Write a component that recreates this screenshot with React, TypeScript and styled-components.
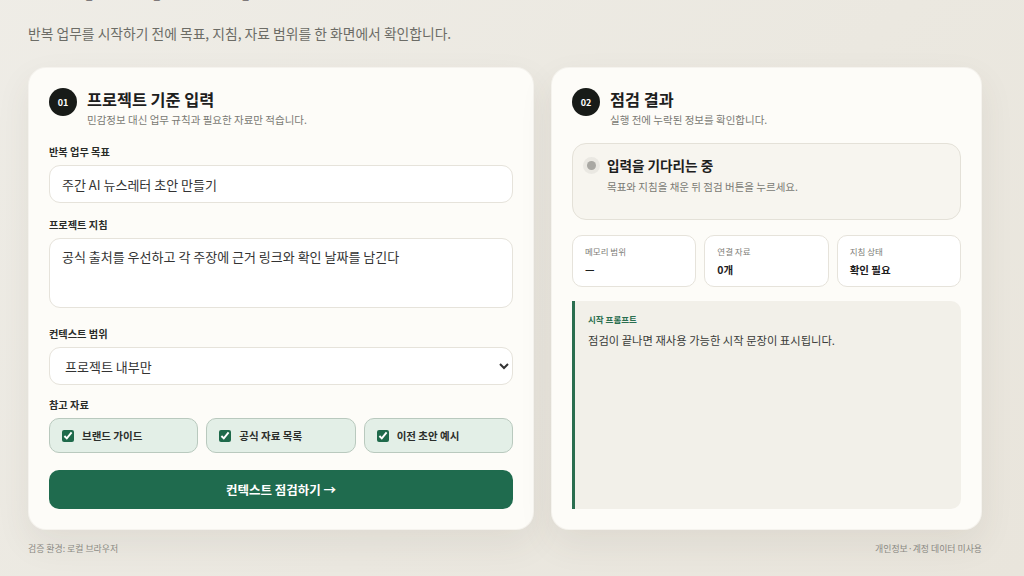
import React, { useLayoutEffect, useState } from "react";
import styled, { createGlobalStyle } from "styled-components";

const GlobalStyle = createGlobalStyle`
  html, body {
    margin: 0;
    padding: 0;
  }

  body {
    background: linear-gradient(135deg, #efede7 0%, #ebe8e0 60%, #e9e5dc 100%);
    font-family: "Noto Sans CJK KR", "Noto Sans", "Liberation Sans", sans-serif;
    color: #1d201d;
    overflow-y: scroll;
  }

  * {
    box-sizing: border-box;
  }
`;

const Page = styled.div`
  width: 954px;
  margin: 0 0 0 28px;
  padding: 72px 0 20px;
`;

const Title = styled.h1`
  margin: 0;
  font-size: 38px;
  line-height: 48px;
  font-weight: 800;
  letter-spacing: -0.5px;
`;

const Lead = styled.p`
  margin: 19px 0 0;
  font-size: 13.8px;
  line-height: 20px;
  color: #6c6c66;
`;

const Grid = styled.div`
  display: grid;
  grid-template-columns: 506px 1fr;
  gap: 17px;
  margin-top: 24px;
`;

const Card = styled.section`
  background: #fdfcf8;
  border-radius: 18px;
  border: 1px solid rgba(120, 110, 90, 0.06);
  box-shadow: 0 14px 34px rgba(80, 70, 50, 0.08);
  padding: 20px;
  display: flex;
  flex-direction: column;
`;

const CardHead = styled.header`
  display: flex;
  align-items: flex-start;
  gap: 10px;
  margin-bottom: 6px;
`;

const Badge = styled.span`
  width: 28px;
  height: 28px;
  border-radius: 50%;
  background: #181b18;
  color: #fff;
  font-size: 9px;
  font-weight: 700;
  display: flex;
  align-items: center;
  justify-content: center;
  flex-shrink: 0;
`;

const HeadText = styled.div`
  display: flex;
  flex-direction: column;
  gap: 2px;
`;

const CardTitle = styled.h2`
  margin: 0;
  font-size: 16.3px;
  line-height: 22px;
  font-weight: 700;
`;

const CardSub = styled.p`
  margin: 0;
  font-size: 10.5px;
  line-height: 16px;
  color: #7a7a74;
`;

const Field = styled.div<{ $space: number }>`
  display: flex;
  flex-direction: column;
  gap: 5px;
  margin-top: ${(p) => p.$space}px;
`;

const Label = styled.label`
  font-size: 10.2px;
  line-height: 16px;
  font-weight: 700;
  color: #2a2c29;
`;

const TextInput = styled.input`
  height: 38px;
  border-radius: 11px;
  border: 1px solid #e6e3db;
  background: #fff;
  padding: 0 12px;
  font-family: inherit;
  font-size: 13px;
  color: #333;
  outline: none;
`;

const TextArea = styled.textarea`
  display: block;
  height: 70px;
  border-radius: 11px;
  border: 1px solid #e6e3db;
  background: #fff;
  padding: 9px 12px;
  font-family: inherit;
  font-size: 13px;
  line-height: 18px;
  color: #333;
  resize: none;
  outline: none;
`;

const Select = styled.select`
  height: 38px;
  border-radius: 11px;
  border: 1px solid #e6e3db;
  background: #fff;
  padding: 0 4px 0 11px;
  font-family: inherit;
  font-size: 13px;
  color: #333;
  outline: none;
`;

const ChipRow = styled.div`
  display: grid;
  grid-template-columns: repeat(3, 1fr);
  gap: 8px;
`;

const Chip = styled.label`
  height: 35px;
  border-radius: 10px;
  border: 1px solid #b9c9be;
  background: #e3efe7;
  display: flex;
  align-items: center;
  gap: 8px;
  padding: 0 12px;
  font-size: 10.5px;
  font-weight: 700;
  color: #2b2e2b;
`;

const Check = styled.input`
  width: 12px;
  height: 12px;
  margin: 0;
  accent-color: #1f6a4b;
`;

const PrimaryButton = styled.button`
  margin-top: 17px;
  height: 39px;
  border: none;
  border-radius: 10px;
  background: #1f6b4e;
  color: #fff;
  font-family: inherit;
  font-size: 12.5px;
  font-weight: 700;
  cursor: pointer;
`;

const StatusBox = styled.div`
  height: 77px;
  border-radius: 14px;
  border: 1px solid #e4e1d8;
  background: #f7f5ef;
  padding: 11px 14px 0;
  margin-top: 9px;
`;

const StatusTitle = styled.div`
  display: flex;
  align-items: center;
  gap: 11px;
  font-size: 13.6px;
  line-height: 20px;
  font-weight: 700;
`;

const Dot = styled.span`
  width: 9px;
  height: 9px;
  border-radius: 50%;
  background: #a9a8a3;
  box-shadow: 0 0 0 4px rgba(170, 168, 160, 0.16);
`;

const StatusSub = styled.p`
  margin: 5px 0 0 20px;
  font-size: 10.5px;
  line-height: 14px;
  color: #7a7a74;
`;

const StatRow = styled.div`
  display: grid;
  grid-template-columns: repeat(3, 1fr);
  gap: 8px;
  margin-top: 15px;
`;

const Stat = styled.div`
  height: 52px;
  border-radius: 10px;
  border: 1px solid #e6e3db;
  background: #fff;
  padding: 9px 12px;
  display: flex;
  flex-direction: column;
  gap: 5px;
`;

const StatLabel = styled.span`
  font-size: 8.5px;
  line-height: 12px;
  color: #7d7d77;
`;

const StatValue = styled.span`
  font-size: 10.5px;
  line-height: 15px;
  font-weight: 700;
`;

const PromptBox = styled.div`
  flex: 1;
  margin-top: 14px;
  background: #f2f0e9;
  border-left: 3px solid #2a6e4f;
  border-radius: 0 10px 10px 0;
  padding: 11px 13px;
`;

const PromptLabel = styled.div`
  font-size: 8.5px;
  line-height: 14px;
  font-weight: 700;
  color: #2a6e4f;
`;

const PromptText = styled.p`
  margin: 6px 0 0;
  font-size: 11.3px;
  line-height: 17px;
  color: #3a3c39;
`;

const Footer = styled.footer`
  display: flex;
  justify-content: space-between;
  margin-top: 12px;
  font-size: 8.9px;
  line-height: 14px;
  color: #8a8983;
`;

const references = [
  { id: "brand", label: "브랜드 가이드" },
  { id: "official", label: "공식 자료 목록" },
  { id: "draft", label: "이전 초안 예시" },
];

const App = () => {
  const [goal, setGoal] = useState<string>("주간 AI 뉴스레터 초안 만들기");
  const [guide, setGuide] = useState<string>(
    "공식 출처를 우선하고 각 주장에 근거 링크와 확인 날짜를 남긴다"
  );
  const [scope, setScope] = useState<string>("project");
  const [checked, setChecked] = useState<Record<string, boolean>>({
    brand: true,
    official: true,
    draft: true,
  });

  useLayoutEffect(() => {
    window.scrollTo(0, document.documentElement.scrollHeight);
  }, []);

  const toggle = (id: string) => {
    setChecked((prev) => ({ ...prev, [id]: !prev[id] }));
  };

  return (
    <>
      <GlobalStyle />
      <Page>
        <Title>반복 업무 컨텍스트 점검</Title>
        <Lead>반복 업무를 시작하기 전에 목표, 지침, 자료 범위를 한 화면에서 확인합니다.</Lead>

        <Grid>
          <Card>
            <CardHead>
              <Badge>01</Badge>
              <HeadText>
                <CardTitle>프로젝트 기준 입력</CardTitle>
                <CardSub>민감정보 대신 업무 규칙과 필요한 자료만 적습니다.</CardSub>
              </HeadText>
            </CardHead>

            <Field $space={10}>
              <Label htmlFor="goal">반복 업무 목표</Label>
              <TextInput id="goal" value={goal} onChange={(e) => setGoal(e.target.value)} />
            </Field>

            <Field $space={14}>
              <Label htmlFor="guide">프로젝트 지침</Label>
              <TextArea id="guide" value={guide} onChange={(e) => setGuide(e.target.value)} />
            </Field>

            <Field $space={18}>
              <Label htmlFor="scope">컨텍스트 범위</Label>
              <Select id="scope" value={scope} onChange={(e) => setScope(e.target.value)}>
                <option value="project">프로젝트 내부만</option>
                <option value="all">전체 대화</option>
              </Select>
            </Field>

            <Field $space={12}>
              <Label>참고 자료</Label>
              <ChipRow>
                {references.map((ref) => (
                  <Chip key={ref.id}>
                    <Check
                      type="checkbox"
                      checked={checked[ref.id]}
                      onChange={() => toggle(ref.id)}
                    />
                    {ref.label}
                  </Chip>
                ))}
              </ChipRow>
            </Field>

            <PrimaryButton type="button">컨텍스트 점검하기 →</PrimaryButton>
          </Card>

          <Card>
            <CardHead>
              <Badge>02</Badge>
              <HeadText>
                <CardTitle>점검 결과</CardTitle>
                <CardSub>실행 전에 누락된 정보를 확인합니다.</CardSub>
              </HeadText>
            </CardHead>

            <StatusBox>
              <StatusTitle>
                <Dot />
                입력을 기다리는 중
              </StatusTitle>
              <StatusSub>목표와 지침을 채운 뒤 점검 버튼을 누르세요.</StatusSub>
            </StatusBox>

            <StatRow>
              <Stat>
                <StatLabel>메모리 범위</StatLabel>
                <StatValue>—</StatValue>
              </Stat>
              <Stat>
                <StatLabel>연결 자료</StatLabel>
                <StatValue>0개</StatValue>
              </Stat>
              <Stat>
                <StatLabel>지침 상태</StatLabel>
                <StatValue>확인 필요</StatValue>
              </Stat>
            </StatRow>

            <PromptBox>
              <PromptLabel>시작 프롬프트</PromptLabel>
              <PromptText>점검이 끝나면 재사용 가능한 시작 문장이 표시됩니다.</PromptText>
            </PromptBox>
          </Card>
        </Grid>

        <Footer>
          <span>검증 환경: 로컬 브라우저</span>
          <span>개인정보·계정 데이터 미사용</span>
        </Footer>
      </Page>
    </>
  );
};

export default App;
